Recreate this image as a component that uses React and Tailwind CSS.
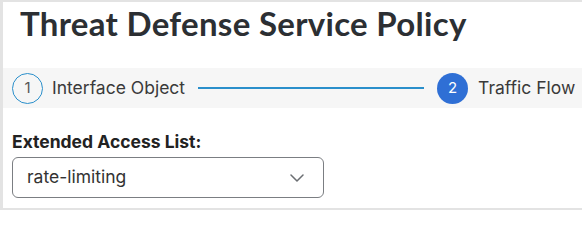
export default function App() {
  return (
    <div className="w-[582px] h-[214px] bg-white font-['Inter','Noto_Sans',sans-serif]">
      <div className="h-[210px] border-t-2 border-l-[3px] border-b-2 border-[#e3e3e3] flex flex-col">
        <h1 className="h-[66px] pl-[17px] pt-[1px] text-[33px] leading-[40px] font-bold text-[#2c2f33] font-['Lato',sans-serif] tracking-[0.3px]">
          Threat Defense Service Policy
        </h1>
        <div className="h-[40px] bg-[#f6f6f6] flex items-center pl-[9px]">
          <div className="w-[31px] h-[31px] rounded-full border-[1.5px] border-[#2a8fcb] flex items-center justify-center text-[15px] text-[#555]">
            1
          </div>
          <span className="ml-[9px] text-[17.5px] text-[#3a3a3a]">Interface Object</span>
          <div className="ml-[13px] w-[226px] h-[2px] bg-[#2a8fcb]"></div>
          <div className="ml-[13px] w-[31px] h-[31px] rounded-full bg-[#2f6fd5] flex items-center justify-center text-[15px] text-white">
            2
          </div>
          <span className="ml-[10px] text-[17.5px] text-[#3a3a3a]">Traffic Flow</span>
        </div>
        <div className="pl-[9px] pt-[23px]">
          <div className="text-[17.5px] leading-[22px] font-bold text-[#222]">Extended Access List:</div>
          <div className="mt-[4px] w-[312px] h-[41px] rounded-[6px] border-[1.5px] border-[#7b7e82] flex items-center justify-between pl-[14px] pr-[19px]">
            <span className="text-[17.5px] text-[#333]">rate-limiting</span>
            <svg width="14" height="8" viewBox="0 0 14 8" fill="none">
              <path d="M1 1L7 7L13 1" stroke="#6b6e72" strokeWidth="1.5" strokeLinecap="round" strokeLinejoin="round" />
            </svg>
          </div>
        </div>
      </div>
    </div>
  );
}
